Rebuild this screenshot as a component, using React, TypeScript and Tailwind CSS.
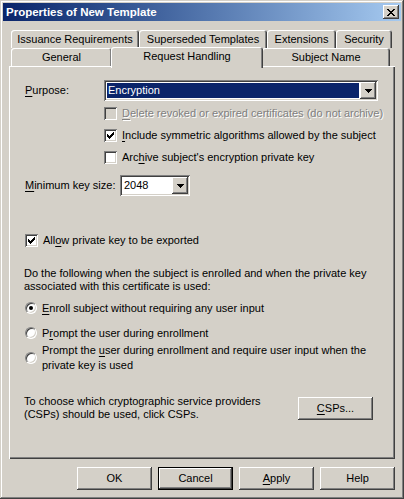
import React from "react";

const raised =
  "shadow-[inset_-1px_-1px_0_#404040,inset_1px_1px_0_#ffffff,inset_-2px_-2px_0_#808080,inset_2px_2px_0_#d4d0c8]";
const sunken =
  "shadow-[inset_1px_1px_0_#808080,inset_-1px_-1px_0_#ffffff,inset_2px_2px_0_#404040,inset_-2px_-2px_0_#d4d0c8]";

function U({ children }: { children: React.ReactNode }) {
  return <span className="underline underline-offset-[2px]">{children}</span>;
}

function Check({ checked, disabled }: { checked?: boolean; disabled?: boolean }) {
  return (
    <div
      className={`w-[13px] h-[13px] shrink-0 flex items-center justify-center ${sunken} ${
        disabled ? "bg-[#d4d0c8]" : "bg-white"
      }`}
    >
      {checked && (
        <svg width="7" height="7" viewBox="0 0 7 7" shapeRendering="crispEdges">
          <path
            d="M0 2h1v3H0z M1 3h1v3H1z M2 4h1v3H2z M3 3h1v3H3z M4 2h1v3H4z M5 1h1v3H5z M6 0h1v3H6z"
            fill="#000"
          />
        </svg>
      )}
    </div>
  );
}

function Radio({ checked }: { checked?: boolean }) {
  return (
    <div className="w-[12px] h-[12px] shrink-0 rounded-full bg-white border border-t-[#808080] border-l-[#808080] border-b-white border-r-white shadow-[inset_1px_1px_0_#404040,inset_-1px_-1px_0_#d4d0c8] flex items-center justify-center">
      {checked && <div className="w-[4px] h-[4px] rounded-full bg-black" />}
    </div>
  );
}

function Arrow() {
  return (
    <div className={`w-[16px] h-[17px] bg-[#d4d0c8] ${raised} flex items-center justify-center`}>
      <svg width="7" height="4" viewBox="0 0 7 4" shapeRendering="crispEdges">
        <path d="M0 0h7v1H0z M1 1h5v1H1z M2 2h3v1H2z M3 3h1v1H3z" fill="#000" />
      </svg>
    </div>
  );
}

function Btn({
  children,
  def,
  className = "",
}: {
  children: React.ReactNode;
  def?: boolean;
  className?: string;
}) {
  return (
    <div
      className={`w-[75px] h-[23px] shrink-0 flex items-center justify-center bg-[#d4d0c8] ${
        def
          ? "border border-black shadow-[inset_-1px_-1px_0_#404040,inset_1px_1px_0_#ffffff,inset_-2px_-2px_0_#808080]"
          : raised
      } ${className}`}
    >
      {children}
    </div>
  );
}

const tabShadow =
  "shadow-[inset_1px_1px_0_#ffffff,inset_-1px_0_0_#404040,inset_-2px_0_0_#808080]";

function Tab({ label, w }: { label: string; w: string }) {
  return (
    <div className={`${w} h-[18px] rounded-t-[3px] flex items-center justify-center pt-[1px] ${tabShadow}`}>
      {label}
    </div>
  );
}

export default function App() {
  return (
    <div className="w-[404px] h-[499px] bg-[#d4d0c8] p-[3px] flex flex-col text-[11px] leading-[13px] text-black font-['Liberation_Sans',Arial,sans-serif] shadow-[inset_-1px_-1px_0_#404040,inset_1px_1px_0_#d4d0c8,inset_-2px_-2px_0_#808080,inset_2px_2px_0_#ffffff]">
      {/* title bar */}
      <div className="h-[18px] flex items-center justify-between bg-linear-to-r from-[#0a246a] to-[#a6caf0] pl-[3px] pr-[2px]">
        <span className="text-white font-bold text-[11.5px]">Properties of New Template</span>
        <div className={`w-[16px] h-[14px] bg-[#d4d0c8] ${raised} flex items-center justify-center`}>
          <svg width="8" height="7" viewBox="0 0 8 7" shapeRendering="crispEdges">
            <path
              d="M0 0h2v1H0z M6 0h2v1H6z M1 1h2v1H1z M5 1h2v1H5z M2 2h4v1H2z M3 3h2v1H3z M2 4h4v1H2z M1 5h2v1H1z M5 5h2v1H5z M0 6h2v1H0z M6 6h2v1H6z"
              fill="#000"
            />
          </svg>
        </div>
      </div>

      {/* tabs */}
      <div className="mt-[9px] ml-[8px] flex">
        <Tab label="Issuance Requirements" w="w-[128px]" />
        <Tab label="Superseded Templates" w="w-[128px]" />
        <Tab label="Extensions" w="w-[69px]" />
        <Tab label="Security" w="w-[56px]" />
      </div>
      <div className="ml-[8px] h-[18px] flex items-end">
        <Tab label="General" w="w-[101px]" />
        <div
          className={`relative z-10 w-[152px] h-[21px] -mb-[2px] -mx-[1px] bg-[#d4d0c8] rounded-t-[3px] flex items-start justify-center pt-[3px] ${tabShadow}`}
        >
          Request Handling
        </div>
        <Tab label="Subject Name" w="w-[128px]" />
      </div>

      {/* panel */}
      <div className="ml-[6px] w-[386px] h-[393px] flex flex-col pl-[16px] shadow-[inset_1px_1px_0_#ffffff,inset_-1px_-1px_0_#404040,inset_-2px_-2px_0_#808080]">
        <div className="mt-[14px] h-[21px] flex items-center">
          <span className="w-[79px]">
            <U>P</U>urpose:
          </span>
          <div className={`w-[274px] h-[21px] bg-white p-[2px] flex ${sunken}`}>
            <div className="flex-1 m-[1px] bg-[#0a246a] text-white flex items-center pl-[1px]">Encryption</div>
            <Arrow />
          </div>
        </div>

        <div className="ml-[79px] mt-[1px] flex flex-col">
          <div className="h-[22px] flex items-center gap-[5px]">
            <Check disabled />
            <span className="text-[#808080] [text-shadow:1px_1px_0_#ffffff]">
              <U>D</U>elete revoked or expired certificates (do not archive)
            </span>
          </div>
          <div className="h-[22px] flex items-center gap-[5px]">
            <Check checked />
            <span>
              <U>I</U>nclude symmetric algorithms allowed by the subject
            </span>
          </div>
          <div className="h-[22px] flex items-center gap-[5px]">
            <Check />
            <span>
              Arc<U>h</U>ive subject's encryption private key
            </span>
          </div>
        </div>

        <div className="mt-[7px] h-[21px] flex items-center">
          <span className="w-[95px]">
            <U>M</U>inimum key size:
          </span>
          <div className={`w-[70px] h-[21px] bg-white p-[2px] flex ${sunken}`}>
            <div className="flex-1 flex items-center pl-[2px]">2048</div>
            <Arrow />
          </div>
        </div>

        <div className="mt-[36px] h-[16px] flex items-center gap-[5px]">
          <Check checked />
          <span>
            All<U>o</U>w private key to be exported
          </span>
        </div>

        <p className="mt-[19px] -ml-[1px] w-[350px]">
          Do the following when the subject is enrolled and when the private key associated with this
          certificate is used:
        </p>

        <div className="mt-[7px] h-[16px] flex items-center gap-[5px]">
          <Radio checked />
          <span>
            <U>E</U>nroll subject without requiring any user input
          </span>
        </div>
        <div className="mt-[9px] h-[16px] flex items-center gap-[5px]">
          <Radio />
          <span>
            P<U>r</U>ompt the user during enrollment
          </span>
        </div>
        <div className="mt-[2px] flex items-center gap-[5px]">
          <Radio />
          <span className="leading-[15px] w-[330px]">
            Prompt the <U>u</U>ser during enrollment and require user input when the private key is used
          </span>
        </div>

        <div className="mt-[22px] flex items-center justify-between pr-[22px]">
          <p className="-ml-[1px] w-[262px]">
            To choose which cryptographic service providers (CSPs) should be used, click CSPs.
          </p>
          <Btn>
            <span>
              <U>C</U>SPs...
            </span>
          </Btn>
        </div>
      </div>

      {/* buttons */}
      <div className="mt-[8px] ml-[74px] flex gap-[6px]">
        <Btn>OK</Btn>
        <Btn def>Cancel</Btn>
        <Btn>
          <span>
            <U>A</U>pply
          </span>
        </Btn>
        <Btn>Help</Btn>
      </div>
    </div>
  );
}
